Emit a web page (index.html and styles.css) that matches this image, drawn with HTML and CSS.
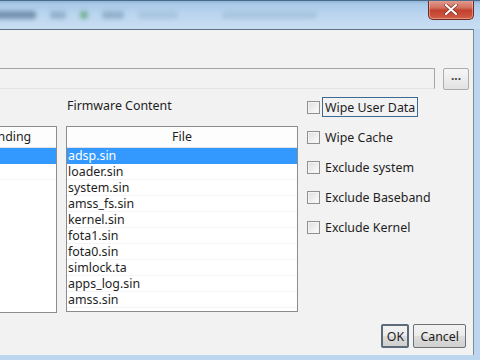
FILE: index.html
```html
<!DOCTYPE html>
<html lang="en">
<head>
    <title>Flash Options</title>
    <link rel="stylesheet" href="styles.css">
</head>
<body>

<div class="window">
    <div class="titlebar">
        <div class="title-blur">
            <span class="blur dark w40"></span>
            <span class="blur mid w16"></span>
            <span class="blur green"></span>
            <span class="blur mid w20"></span>
            <span class="blur light w40"></span>
            <span class="blur light w95"></span>
        </div>
        <div class="close-btn">
            <svg width="14" height="11" viewBox="0 0 14 11">
                <path d="M2 1 L12 10 M12 1 L2 10" stroke="#7a2a20" stroke-width="3.4" stroke-linecap="round"/>
                <path d="M2 1 L12 10 M12 1 L2 10" stroke="#fff" stroke-width="2.2" stroke-linecap="round"/>
            </svg>
        </div>
    </div>

    <div class="client">
        <div class="path-row">
            <div class="path-field"></div>
            <button class="browse-btn">...</button>
        </div>

        <div class="columns">
            <div class="list pending">
                <div class="list-head left">Pending</div>
                <div class="list-row selected"></div>
                <div class="list-row"></div>
            </div>

            <div class="firmware">
                <div class="group-label">Firmware Content</div>
                <div class="list files">
                    <div class="list-head">File</div>
                    <div class="list-row selected">adsp.sin</div>
                    <div class="list-row">loader.sin</div>
                    <div class="list-row">system.sin</div>
                    <div class="list-row">amss_fs.sin</div>
                    <div class="list-row">kernel.sin</div>
                    <div class="list-row">fota1.sin</div>
                    <div class="list-row">fota0.sin</div>
                    <div class="list-row">simlock.ta</div>
                    <div class="list-row">apps_log.sin</div>
                    <div class="list-row">amss.sin</div>
                </div>
            </div>

            <div class="options">
                <label class="option"><span class="box"></span><span class="text focused">Wipe User Data</span></label>
                <label class="option"><span class="box"></span><span class="text">Wipe Cache</span></label>
                <label class="option"><span class="box"></span><span class="text">Exclude system</span></label>
                <label class="option"><span class="box"></span><span class="text">Exclude Baseband</span></label>
                <label class="option"><span class="box"></span><span class="text">Exclude Kernel</span></label>
            </div>
        </div>

        <div class="footer">
            <button class="btn default">OK</button>
            <button class="btn">Cancel</button>
        </div>
    </div>

    <div class="bottom-frame"></div>
</div>

</body>
</html>
```

FILE: styles.css
```css
body {
    margin: 0;
    width: 480px;
    height: 360px;
    overflow: hidden;
    font-family: "Noto Sans", "Open Sans", Arial, sans-serif;
    font-size: 12.4px;
    color: #1e1e1e;
    background-color: #bcd6ef;
}
.window {
    display: flex;
    flex-direction: column;
    width: 480px;
    height: 360px;
}
.titlebar {
    height: 29px;
    display: flex;
    align-items: flex-start;
    background: linear-gradient(#8fb3d6 0px, #a9c9e8 3px, #bcd6ef 14px, #c9def2 28px);
    border-top: 1px solid #4d6a88;
    box-sizing: border-box;
    overflow: hidden;
}
.title-blur {
    display: flex;
    align-items: center;
    gap: 14px;
    margin-top: 10px;
    margin-left: -4px;
}
.blur {
    display: block;
    height: 8px;
    filter: blur(2px);
    border-radius: 3px;
}
.blur.dark { background-color: #5d7d9d; opacity: 0.75; }
.blur.mid { background-color: #7b99b8; opacity: 0.6; }
.blur.light { background-color: #9fbbd6; opacity: 0.6; }
.blur.green { width: 8px; background-color: #5aa37a; opacity: 0.7; }
.w40 { width: 40px; }
.w16 { width: 16px; }
.w20 { width: 22px; }
.w95 { width: 95px; margin-left: 30px; }
.close-btn {
    margin-left: auto;
    margin-right: 6px;
    margin-top: -1px;
    width: 46px;
    height: 20px;
    box-sizing: border-box;
    border: 1px solid #6e2a22;
    border-top: none;
    border-radius: 0 0 5px 5px;
    background: linear-gradient(#e2a295 0%, #d2705f 40%, #c2412e 55%, #d35e48 100%);
    box-shadow: inset 0 0 0 1px rgba(255, 210, 200, 0.45);
    display: flex;
    justify-content: center;
    align-items: center;
}
.client {
    flex: 1;
    display: flex;
    flex-direction: column;
    background-color: #f2f2f2;
    border-top: 1px solid #5f7185;
    border-right: 1px solid #7f8c99;
    margin-right: 6px;
    overflow: hidden;
}
.path-row {
    display: flex;
    align-items: flex-start;
    margin-top: 38px;
    height: 22px;
}
.path-field {
    margin-left: -10px;
    width: 445px;
    height: 21px;
    box-sizing: border-box;
    border: 1px solid #a6a6a6;
    border-bottom-color: #e3e3e3;
    background-color: #f2f2f2;
}
.browse-btn {
    margin-left: 8px;
    width: 26px;
    height: 22px;
    padding: 0 0 6px;
    border: 1px solid #acacac;
    border-radius: 2px;
    background: linear-gradient(#f6f6f6, #e2e2e2);
    font-family: inherit;
    font-size: 12px;
    font-weight: bold;
    color: #444;
    line-height: 14px;
}
.columns {
    display: flex;
    align-items: flex-start;
    margin-top: 6px;
}
.list {
    background-color: #fff;
    border: 1px solid #8c8c8c;
    box-sizing: border-box;
    overflow: hidden;
}
.list-head {
    height: 21px;
    line-height: 20px;
    text-align: center;
    border-bottom: 1px solid #e2e2e2;
    box-sizing: border-box;
    background-color: #fdfdfd;
}
.list-head.left {
    text-align: left;
    white-space: nowrap;
    padding-left: 2px;
}
.list-row {
    height: 16px;
    line-height: 16px;
    padding-left: 1px;
    border-bottom: 1px solid #f4f4f4;
    box-sizing: border-box;
    white-space: nowrap;
}
.list-row.selected {
    background-color: #3399ff;
    border-bottom-color: #3399ff;
    color: #fff;
}
.pending {
    margin-left: -20px;
    margin-top: 30px;
    width: 77px;
    height: 187px;
}
.firmware {
    margin-left: 9px;
    display: flex;
    flex-direction: column;
}
.group-label {
    margin-left: 1px;
    height: 16px;
    line-height: 16px;
    margin-top: 2px;
    margin-bottom: 12px;
}
.files {
    width: 232px;
    height: 186px;
}
.options {
    margin-left: 9px;
    margin-top: 1px;
    display: flex;
    flex-direction: column;
    gap: 10px;
}
.option {
    display: flex;
    align-items: center;
    height: 20px;
}
.box {
    width: 13px;
    height: 13px;
    box-sizing: border-box;
    border: 1px solid #8f8f8f;
    background: linear-gradient(135deg, #dedede, #fdfdfd);
    box-shadow: inset 0 0 0 1px #f4f4f4;
    margin-right: 2px;
}
.text {
    display: block;
    height: 20px;
    line-height: 19px;
    padding: 0 2px 0 2px;
    box-sizing: border-box;
    border: 1px solid transparent;
}
.text.focused {
    border-color: #3d6a92;
}
.footer {
    margin-top: auto;
    display: flex;
    justify-content: flex-end;
    gap: 4px;
    padding: 0 7px 7px 0;
}
.btn {
    height: 24px;
    padding: 0 6px;
    border: 1px solid #707070;
    border-radius: 2px;
    background: linear-gradient(#f2f2f2 0%, #ebebeb 50%, #dddddd 51%, #cfcfcf 100%);
    font-family: inherit;
    font-size: 12.4px;
    color: #1e1e1e;
}
.btn.default {
    width: 28px;
    padding: 0;
    border: 2px solid #5d6a78;
}
.bottom-frame {
    height: 5px;
    background-color: #bcd6ef;
}
```
